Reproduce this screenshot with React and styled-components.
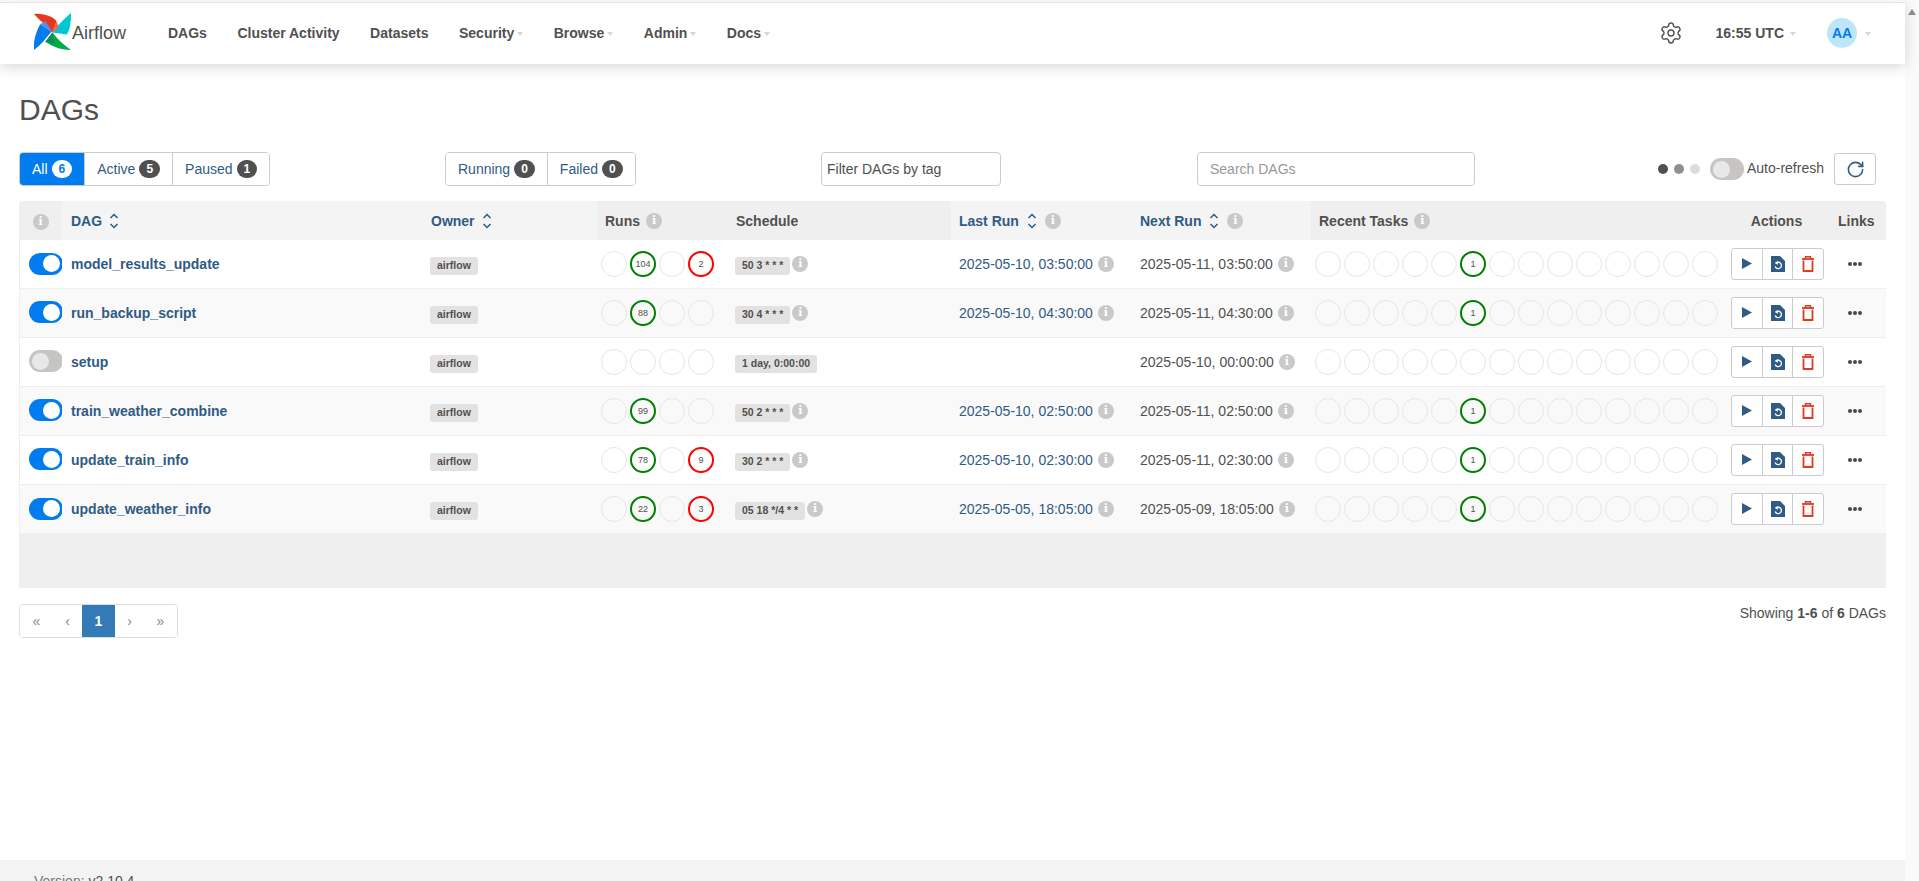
import React from 'react';
import styled, { createGlobalStyle } from 'styled-components';
import { Settings, RotateCw } from 'lucide-react';

const Global = createGlobalStyle`
  html, body { margin: 0; padding: 0; height: 100%; overflow: hidden; background: #fff; }
  body { font-family: "Liberation Sans", Arial, sans-serif; font-size: 14px; color: #51504f; }
  * { box-sizing: border-box; }
`;

const Shell = styled.div`display: flex; height: 881px; overflow: hidden;`;
const Main = styled.div`flex: 1; min-width: 0; display: flex; flex-direction: column;`;
const ScrollTrack = styled.div`width: 14px; background: #fafafa; display: flex; justify-content: center; padding-top: 9px;`;
const ScrollArrow = styled.div`width: 0; height: 0; border-left: 4px solid transparent; border-right: 4px solid transparent; border-bottom: 6px solid #8f8f8f;`;

const Nav = styled.nav`
  margin-top: 2px; height: 62px; border-top: 1px solid #e4e4e4; background: #fff;
  box-shadow: 0 3px 13px rgba(0,0,0,.16);
  display: flex; align-items: center; padding: 0 34px 0 34px; position: relative;
`;
const Brand = styled.div`display: flex; align-items: center; width: 134px; height: 38px; margin-top: -4px;`;
const BrandName = styled.span`font-size: 18px; color: #51504f; margin-left: 1px; margin-top: 3px;`;
const NavItems = styled.div`display: flex; gap: 30.5px; align-items: center; flex: 1; margin-top: -2px;`;
const NavItem = styled.span`font-weight: 700; font-size: 14px; color: #51504f; display: inline-flex; align-items: center;`;
const Caret = styled.i`
  display: inline-block; width: 0; height: 0; margin-left: ${p => p.$gap || 3}px; margin-top: 2px;
  border-left: 3.5px solid transparent; border-right: 3.5px solid transparent; border-top: 4px solid #d6d6d6;
`;
const NavRight = styled.div`display: flex; align-items: center; margin-top: -2px;`;
const Clock = styled.span`font-weight: 700; font-size: 14px; color: #51504f; display: inline-flex; align-items: center; margin-left: 33px; margin-right: 31px;`;
const Avatar = styled.span`width: 30px; height: 30px; border-radius: 50%; background: #bde6fb; color: #017cee; font-weight: 700; font-size: 14px; display: inline-flex; align-items: center; justify-content: center;`;
const GearWrap = styled.span`display: inline-flex; color: #51504f;`;

const Content = styled.main`flex: 1; padding: 0 19px; min-height: 0;`;
const Title = styled.h1`margin: 29px 0 0; font-size: 30px; font-weight: 400; line-height: 33px; color: #51504f;`;

const Toolbar = styled.div`
  display: grid; grid-template-columns: 426px 376px 376px 1fr auto; align-items: center; margin-top: 26px; height: 34px; width: 1867px;
`;
const BtnGroup = styled.div`display: inline-flex; width: max-content; height: 34px; border: 1px solid #ccc; border-radius: 4px; overflow: hidden;`;
const FilterBtn = styled.span`
  display: inline-flex; align-items: center; gap: 4px; padding: 0 12px;
  background: ${p => p.$active ? '#017cee' : '#fff'}; color: ${p => p.$active ? '#fff' : '#305b85'};
  & + & { border-left: 1px solid #ccc; }
`;
const Badge = styled.b`
  height: 18px; padding: 0 7px; border-radius: 10px; font-size: 12px; line-height: 18px; display: inline-block; text-align: center;
  background: ${p => p.$active ? '#fff' : '#51504f'}; color: ${p => p.$active ? '#017cee' : '#fff'};
`;
const Field = styled.input`
  height: 34px; width: ${p => p.$w}px; border: 1px solid #ccc; border-radius: 4px; padding: 0 ${p => p.$pad}px;
  font: 14px "Liberation Sans", Arial, sans-serif; color: #51504f; outline: none;
  &::placeholder { color: ${p => p.$ph}; opacity: 1; }
`;
const Refresh = styled.div`display: flex; align-items: center; justify-content: flex-end; padding-right: 10px; white-space: nowrap;`;
const Dot = styled.span`width: 10px; height: 10px; border-radius: 50%; background: ${p => p.$c}; margin-right: ${p => p.$mr}px;`;
const AutoLabel = styled.span`margin-left: 3px; margin-top: -3px; color: #51504f;`;
const RefreshBtn = styled.span`
  margin-left: 10px; width: 42px; height: 32px; border: 1px solid #ccc; border-radius: 3px; display: inline-flex; align-items: center; justify-content: center; color: #305b85;
`;

const ToggleTrack = styled.span`
  display: inline-flex; width: 34px; height: 22px; border-radius: 11px; padding: 0 3px; align-items: center; flex: none;
  justify-content: ${p => p.$on ? 'flex-end' : 'flex-start'}; background: ${p => p.$on ? '#017cee' : '#c6c5c4'};
`;
const Knob = styled.span`width: 17px; height: 17px; border-radius: 50%; background: ${p => p.$on ? '#fff' : '#e8e8e8'};`;

const TableWrap = styled.div`margin-top: 15px; border-radius: 4px 4px 0 0; overflow: hidden; background: #efefef; width: 1867px; padding-bottom: 55px;`;
const Table = styled.table`width: 1867px; table-layout: fixed; border-collapse: collapse;`;
const Th = styled.th`
  height: 39px; padding: 0 8px; text-align: ${p => p.$center ? 'center' : 'left'}; font-size: 14px; font-weight: 700;
  background: ${p => p.$sort ? '#f4f4f4' : '#efefef'}; color: ${p => p.$sort ? '#305b85' : '#51504f'};
`;
const ThInner = styled.span`display: inline-flex; align-items: center; gap: ${p => p.$gap || 7}px; margin-left: ${p => p.$ml || 0}px;`;
const Tr = styled.tr`
  background: ${p => p.$odd ? '#f9f9f9' : '#fff'};
  & > td { height: 49px; border-bottom: 1px solid #eee; }
  &:first-child > td { height: 48px; }
  &:last-child > td { border-bottom: 0; }
`;
const Td = styled.td`padding: 0 8px; vertical-align: middle; overflow: hidden;`;
const ToggleCell = styled(Td)`padding: 0 0 0 10px; box-shadow: inset 1px 0 #eee;`;
const DagName = styled.span`font-weight: 700; color: #305b85; font-size: 14px; margin-left: 1px;`;
const Label = styled.span`
  display: inline-block; background: #e2e2e2; border-radius: 3px; font-weight: 700; font-size: 10.5px; color: #51504f;
  line-height: 11px; padding: 3px 7px 4px; margin-left: -1px; white-space: nowrap; position: relative; top: 2px;
`;
const Circles = styled.div`display: flex; gap: 3px; margin-left: ${p => p.$ml}px;`;
const Circle = styled.span`
  width: 26px; height: 26px; border-radius: 50%; flex: none; display: inline-flex; align-items: center; justify-content: center;
  font-size: 9px; color: #51504f; background: transparent;
  border: ${p => p.$c ? `2px solid ${p.$c}` : '1.5px solid #e6e6e6'};
`;
const Info = styled.span`
  width: 16px; height: 16px; border-radius: 50%; background: #c9c9c9; color: #fff; font: 700 11px/16px "DejaVu Serif", serif;
  display: inline-flex; align-items: center; justify-content: center; flex: none;
`;
const Inline = styled.div`display: flex; align-items: center; gap: ${p => p.$gap || 5}px;`;
const LastRun = styled.span`color: ${p => p.$link ? '#305b85' : '#51504f'}; white-space: nowrap;`;
const ActionGroup = styled.div`display: flex; width: 93px; height: 32px; margin: 0 auto; border: 1px solid #ccc; border-radius: 3px; background: #fff;`;
const ActionBtn = styled.span`
  flex: 1; display: flex; align-items: center; justify-content: center;
  & + & { border-left: 1px solid #ccc; }
`;
const More = styled.div`display: flex; justify-content: center; padding-right: 6px;`;

const PageRow = styled.div`display: flex; justify-content: space-between; margin-top: 16px; width: 1867px;`;
const Pager = styled.div`display: inline-flex; height: 34px; border: 1px solid #ddd; border-radius: 4px; overflow: hidden;`;
const PageCell = styled.span`
  width: ${p => p.$w}px; display: flex; align-items: center; justify-content: center; font-size: 14px; font-weight: ${p => p.$active ? 700 : 400};
  background: ${p => p.$active ? '#337ab7' : '#fff'}; color: ${p => p.$active ? '#fff' : '#888'};
  & + & { border-left: ${p => p.$active ? '0' : '1px solid #ddd'}; }
`;
const Showing = styled.span`padding-top: 1px; color: #51504f;`;

const Footer = styled.footer`height: 21px; background: #f3f3f3; padding: 13px 0 0 34px; overflow: hidden; font-size: 14px; line-height: 16px; color: #777;`;
const Version = styled.span`color: #51504f;`;

const Logo = () => (
  <svg width="37" height="37" viewBox="0 0 36 36">
    <path d="M0 1 C8 0 18 3 22 8 L18 19 C12 12 5 7 0 1Z" fill="#e43921" />
    <path d="M36 0 C36 9 35 16 32 21 L18 19 C22 13 29 6 36 0Z" fill="#00c7d4" />
    <path d="M36 36 C28 36 20 34 11 28 L18 19 C23 26 29 31 36 36Z" fill="#00ad46" />
    <path d="M0 36 C-1 28 2 18 6 11 L17 18 C12 24 7 31 0 36Z" fill="#017cee" />
    <path d="M6 11 L11 8 C13 11 16 15 18 19Z" fill="#5a8de0" />
    <path d="M22 8 L18 19 L24 14Z" fill="#f0644d" />
    <path d="M18 19 L11 28 L20 30Z" fill="#0a8f5a" />
  </svg>
);
const Sort = () => (
  <svg width="10" height="16" viewBox="0 0 10 16" fill="none" stroke="#305b85" strokeWidth="1.5">
    <path d="M1.5 5 L5 1.5 L8.5 5" /><path d="M1.5 11 L5 14.5 L8.5 11" />
  </svg>
);
const Play = () => (<svg width="10" height="11" viewBox="0 0 10 11"><path d="M0 0 L10 5.5 L0 11Z" fill="#305b85" /></svg>);
const FileReload = () => (
  <svg width="14" height="16" viewBox="0 0 14 16">
    <path d="M0 0 H9 L14 5 V16 H0Z" fill="#305b85" />
    <path d="M5 7.1 A3.2 3.2 0 1 1 4.2 10.5" fill="none" stroke="#fff" strokeWidth="1.3" />
    <path d="M6.8 5.1 V8.7 L3.6 7.1Z" fill="#fff" />
  </svg>
);
const Trash = () => (
  <svg width="12" height="16" viewBox="0 0 12 16" fill="none" stroke="#e43921" strokeWidth="1.8">
    <path d="M1.5 4.5 V15 H10.5 V4.5" /><path d="M0 3 H12" /><path d="M3.5 3 V0.8 H8.5 V3" strokeWidth="1.4" />
  </svg>
);
const Dots = () => (
  <svg width="14" height="4" viewBox="0 0 14 4" fill="#3f4a55"><circle cx="2" cy="2" r="2" /><circle cx="7" cy="2" r="2" /><circle cx="12" cy="2" r="2" /></svg>
);

const G = '#008000', R = '#ff0000';
const rows = [
  { name: 'model_results_update', on: true, runs: [null, '104', null, '2'], sched: '50 3 * * *', last: '2025-05-10, 03:50:00', next: '2025-05-11, 03:50:00', task: true, schedInfo: true },
  { name: 'run_backup_script', on: true, runs: [null, '88', null, null], sched: '30 4 * * *', last: '2025-05-10, 04:30:00', next: '2025-05-11, 04:30:00', task: true, schedInfo: true },
  { name: 'setup', on: false, runs: [null, null, null, null], sched: '1 day, 0:00:00', last: '', next: '2025-05-10, 00:00:00', task: false, schedInfo: false },
  { name: 'train_weather_combine', on: true, runs: [null, '99', null, null], sched: '50 2 * * *', last: '2025-05-10, 02:50:00', next: '2025-05-11, 02:50:00', task: true, schedInfo: true },
  { name: 'update_train_info', on: true, runs: [null, '78', null, '9'], sched: '30 2 * * *', last: '2025-05-10, 02:30:00', next: '2025-05-11, 02:30:00', task: true, schedInfo: true },
  { name: 'update_weather_info', on: true, runs: [null, '22', null, '3'], sched: '05 18 */4 * *', last: '2025-05-05, 18:05:00', next: '2025-05-09, 18:05:00', task: true, schedInfo: true },
];
const widths = [43, 361, 174, 131, 223, 181, 179, 412, 107, 56];

export default function App() {
  return (
    <Shell>
      <Global />
      <Main>
        <Nav>
          <Brand><Logo /><BrandName>Airflow</BrandName></Brand>
          <NavItems>
            <NavItem>DAGs</NavItem>
            <NavItem>Cluster Activity</NavItem>
            <NavItem>Datasets</NavItem>
            <NavItem>Security<Caret /></NavItem>
            <NavItem>Browse<Caret /></NavItem>
            <NavItem>Admin<Caret /></NavItem>
            <NavItem>Docs<Caret /></NavItem>
          </NavItems>
          <NavRight>
            <GearWrap><Settings size={24} strokeWidth={1.4} /></GearWrap>
            <Clock>16:55 UTC<Caret $gap={6} /></Clock>
            <Avatar>AA</Avatar>
            <Caret $gap={8} />
          </NavRight>
        </Nav>
        <Content>
          <Title>DAGs</Title>
          <Toolbar>
            <BtnGroup>
              <FilterBtn $active>All<Badge $active>6</Badge></FilterBtn>
              <FilterBtn>Active<Badge>5</Badge></FilterBtn>
              <FilterBtn>Paused<Badge>1</Badge></FilterBtn>
            </BtnGroup>
            <BtnGroup>
              <FilterBtn>Running<Badge>0</Badge></FilterBtn>
              <FilterBtn>Failed<Badge>0</Badge></FilterBtn>
            </BtnGroup>
            <Field $w={180} $pad={5} $ph="#51504f" placeholder="Filter DAGs by tag" readOnly />
            <Field $w={278} $pad={12} $ph="#999" placeholder="Search DAGs" readOnly />
            <Refresh>
              <Dot $c="#51504f" $mr={6} /><Dot $c="#8f8f8f" $mr={6} /><Dot $c="#dcdcdc" $mr={10} />
              <ToggleTrack><Knob /></ToggleTrack>
              <AutoLabel>Auto-refresh</AutoLabel>
              <RefreshBtn><RotateCw size={19} strokeWidth={2} /></RefreshBtn>
            </Refresh>
          </Toolbar>
          <TableWrap>
            <Table>
              <colgroup>{widths.map((w, i) => <col key={i} style={{ width: w }} />)}</colgroup>
              <thead>
                <tr>
                  <Th $center><Info>i</Info></Th>
                  <Th $sort><ThInner $ml={1}>DAG<Sort /></ThInner></Th>
                  <Th $sort><ThInner>Owner<Sort /></ThInner></Th>
                  <Th><ThInner $gap={6}>Runs<Info>i</Info></ThInner></Th>
                  <Th>Schedule</Th>
                  <Th $sort><ThInner $gap={8}>Last Run<Sort /><Info>i</Info></ThInner></Th>
                  <Th $sort><ThInner $gap={8}>Next Run<Sort /><Info>i</Info></ThInner></Th>
                  <Th><ThInner $gap={6}>Recent Tasks<Info>i</Info></ThInner></Th>
                  <Th $center>Actions</Th>
                  <Th>Links</Th>
                </tr>
              </thead>
              <tbody>
                {rows.map((r, i) => (
                  <Tr key={r.name} $odd={i % 2 === 1}>
                    <ToggleCell><ToggleTrack $on={r.on}><Knob $on={r.on} /></ToggleTrack></ToggleCell>
                    <Td><DagName>{r.name}</DagName></Td>
                    <Td><Label>airflow</Label></Td>
                    <Td>
                      <Circles $ml={-4}>
                        {r.runs.map((v, j) => <Circle key={j} $c={v ? (j === 1 ? G : R) : null}>{v}</Circle>)}
                      </Circles>
                    </Td>
                    <Td>
                      <Inline $gap={2}>
                        <Label>{r.sched}</Label>
                        {r.schedInfo && <Info>i</Info>}
                      </Inline>
                    </Td>
                    <Td>
                      {r.last && <Inline><LastRun $link>{r.last}</LastRun><Info>i</Info></Inline>}
                    </Td>
                    <Td>
                      <Inline><LastRun>{r.next}</LastRun><Info>i</Info></Inline>
                    </Td>
                    <Td>
                      <Circles $ml={-4}>
                        {Array.from({ length: 14 }, (_, j) => (
                          <Circle key={j} $c={r.task && j === 5 ? G : null}>{r.task && j === 5 ? '1' : ''}</Circle>
                        ))}
                      </Circles>
                    </Td>
                    <Td>
                      <ActionGroup>
                        <ActionBtn><Play /></ActionBtn>
                        <ActionBtn><FileReload /></ActionBtn>
                        <ActionBtn><Trash /></ActionBtn>
                      </ActionGroup>
                    </Td>
                    <Td><More><Dots /></More></Td>
                  </Tr>
                ))}
              </tbody>
            </Table>
          </TableWrap>
          <PageRow>
            <Pager>
              <PageCell $w={33}>«</PageCell>
              <PageCell $w={29}>‹</PageCell>
              <PageCell $w={33} $active>1</PageCell>
              <PageCell $w={29}>›</PageCell>
              <PageCell $w={33}>»</PageCell>
            </Pager>
            <Showing>Showing <b>1-6</b> of <b>6</b> DAGs</Showing>
          </PageRow>
        </Content>
        <Footer>Version: <Version>v2.10.4</Version></Footer>
      </Main>
      <ScrollTrack><ScrollArrow /></ScrollTrack>
    </Shell>
  );
}
